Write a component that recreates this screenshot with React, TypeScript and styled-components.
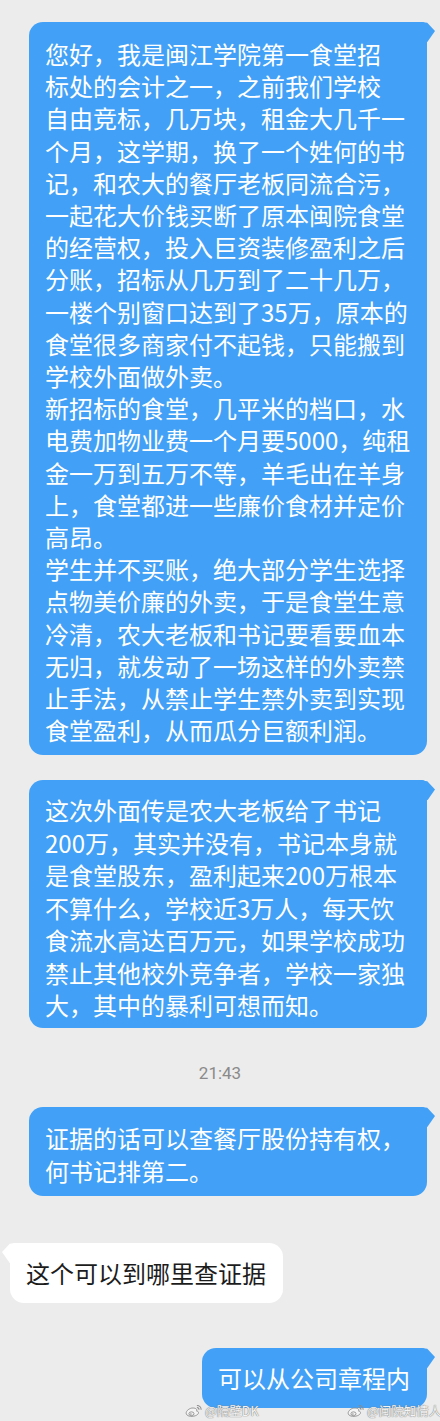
import styled, { createGlobalStyle } from "styled-components";

const GlobalStyle = createGlobalStyle`
  html, body {
    margin: 0;
    padding: 0;
    background: #ececec;
  }
  body {
    font-family: "Noto Sans CJK SC", "Noto Sans", sans-serif;
  }
`

const BLUE = "#42a1f6"

const firstMessage = [
    "您好，我是闽江学院第一食堂招",
    "标处的会计之一，之前我们学校",
    "自由竞标，几万块，租金大几千一",
    "个月，这学期，换了一个姓何的书",
    "记，和农大的餐厅老板同流合污，",
    "一起花大价钱买断了原本闽院食堂",
    "的经营权，投入巨资装修盈利之后",
    "分账，招标从几万到了二十几万，",
    "一楼个别窗口达到了35万，原本的",
    "食堂很多商家付不起钱，只能搬到",
    "学校外面做外卖。",
    "新招标的食堂，几平米的档口，水",
    "电费加物业费一个月要5000，纯租",
    "金一万到五万不等，羊毛出在羊身",
    "上，食堂都进一些廉价食材并定价",
    "高昂。",
    "学生并不买账，绝大部分学生选择",
    "点物美价廉的外卖，于是食堂生意",
    "冷清，农大老板和书记要看要血本",
    "无归，就发动了一场这样的外卖禁",
    "止手法，从禁止学生禁外卖到实现",
    "食堂盈利，从而瓜分巨额利润。",
]

const secondMessage = [
    "这次外面传是农大老板给了书记",
    "200万，其实并没有，书记本身就",
    "是食堂股东，盈利起来200万根本",
    "不算什么，学校近3万人，每天饮",
    "食流水高达百万元，如果学校成功",
    "禁止其他校外竞争者，学校一家独",
    "大，其中的暴利可想而知。",
]

const thirdMessage = [
    "证据的话可以查餐厅股份持有权，",
    "何书记排第二。",
]

function WeiboLogo(){
    return(
        <svg width="17" height="14" viewBox="0 0 20 16">
            <path d="M8 4.5C3.5 5.5 0.5 9 1.6 11.6C2.8 14.6 9.5 15.3 13.8 12.8C17 10.8 16.2 8.2 13.6 8.1C14.6 5.6 12.3 4.3 8 4.5Z" fill="#f4f4f4" stroke="#8a8a8a" strokeWidth="1"/>
            <ellipse cx="7.6" cy="11.2" rx="3" ry="2.2" fill="none" stroke="#8a8a8a" strokeWidth="1"/>
            <circle cx="7" cy="11.4" r="0.9" fill="#8a8a8a"/>
            <path d="M14 1.5A5 5 0 0 1 19 6.5" fill="none" stroke="#8a8a8a" strokeWidth="1.2"/>
            <path d="M14 4A2.5 2.5 0 0 1 16.5 6.5" fill="none" stroke="#8a8a8a" strokeWidth="1.2"/>
        </svg>
    )
}

function App(){
    return(
        <Screen>
            <GlobalStyle/>
            <Thread>
                <Bubble $side="out" $wide $top={16}>
                    {firstMessage.map((line, i) => <Line key={i} $height={32.2}>{line}</Line>)}
                </Bubble>
                <Bubble $side="out" $wide $gap={25} $bottom={6}>
                    {secondMessage.map((line, i) => <Line key={i} $height={32.5}>{line}</Line>)}
                </Bubble>
                <TimeStamp>21:43</TimeStamp>
                <Bubble $side="out" $wide $gap={22}>
                    {thirdMessage.map((line, i) => <Line key={i} $height={33}>{line}</Line>)}
                </Bubble>
                <Bubble $side="in" $single $gap={47}>
                    <Line>这个可以到哪里查证据</Line>
                </Bubble>
                <Bubble $side="out" $single $gap={45}>
                    <Line>可以从公司章程内</Line>
                </Bubble>
            </Thread>
            <Watermarks>
                <Mark $left={185}><WeiboLogo/>@隔壁DK</Mark>
                <Mark $left={347}><WeiboLogo/>@闽院知情人</Mark>
            </Watermarks>
        </Screen>
    )
}

export default App

const Screen = styled.div`
    position: relative;
    min-height: 1421px;
    overflow: hidden;
    background: #ececec;
`

const Thread = styled.div`
    display: flex;
    flex-direction: column;
    padding: 22px 13px 0 10px;
`

const Bubble = styled.div<{ $side: "in" | "out", $wide?: boolean, $single?: boolean, $gap?: number, $top?: number, $bottom?: number }>`
    position: relative;
    box-sizing: border-box;
    align-self: ${p => p.$side === "out" ? "flex-end" : "flex-start"};
    width: ${p => p.$wide ? "398px" : "auto"};
    margin-top: ${p => p.$gap ? p.$gap : 0}px;
    padding: ${p => p.$single ? "14px 17px 14px 16px" : `${p.$top ?? 14}px 16px ${p.$bottom ?? 9}px 16px`};
    background: ${p => p.$side === "out" ? BLUE : "#ffffff"};
    color: ${p => p.$side === "out" ? "#ffffff" : "#1c1c1c"};
    font-size: 24px;
    border-radius: ${p => p.$side === "out" ? "14px 5px 14px 14px" : "5px 14px 14px 14px"};

    &::after{
        content: "";
        position: absolute;
        top: 0;
        width: 14px;
        height: 20px;
        background: inherit;
        ${p => p.$side === "out"
            ? "right: -8px; clip-path: polygon(0 0, 45% 4%, 100% 45%, 45% 100%, 0 100%);"
            : "left: -8px; clip-path: polygon(100% 0, 55% 4%, 0 45%, 55% 100%, 100% 100%);"}
    }
`

const Line = styled.span<{ $height?: number }>`
    display: block;
    white-space: nowrap;
    line-height: ${p => p.$height ? p.$height : 32}px;
`

const TimeStamp = styled.div`
    align-self: center;
    margin-top: 33px;
    margin-left: 3px;
    font-family: Roboto, "Liberation Sans", sans-serif;
    font-size: 17px;
    line-height: 24px;
    color: #8a8a8a;
`

const Watermarks = styled.div`
    position: absolute;
    left: 0;
    right: 0;
    bottom: 2px;
    height: 16px;
`

const Mark = styled.div<{ $left: number }>`
    position: absolute;
    top: 0;
    left: ${p => p.$left}px;
    display: flex;
    align-items: center;
    gap: 3px;
    white-space: nowrap;
    font-size: 12.5px;
    line-height: 16px;
    color: #f4f4f4;
    text-shadow: 0 0 1px #7a7a7a, 0 0 1px #7a7a7a;
`
